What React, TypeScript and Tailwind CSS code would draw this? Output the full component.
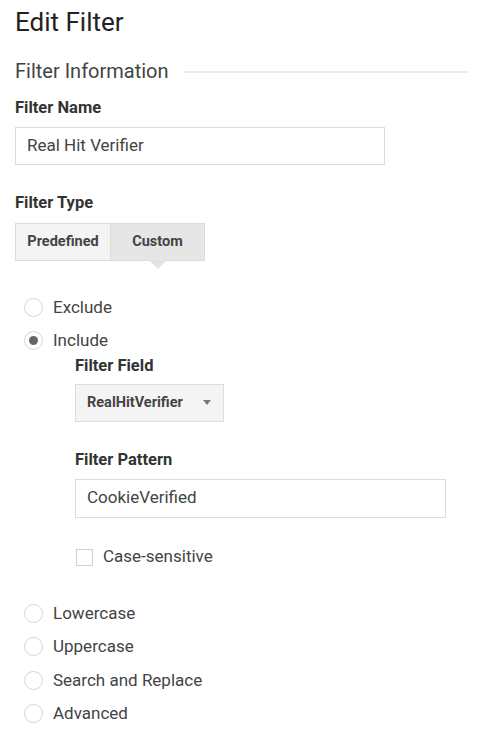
import React, { useState } from 'react';

const Radio: React.FC<{ label: string; checked?: boolean; onClick: () => void }> = ({ label, checked, onClick }) => (
  <button onClick={onClick} className="flex items-center h-[33.5px] text-left">
    <span className="w-[19px] h-[19px] rounded-full border border-[#d6d6d6] bg-white flex items-center justify-center ml-[24px] mr-[10px]">
      {checked && <span className="w-[9px] h-[9px] rounded-full bg-[#666]" />}
    </span>
    <span className="text-[17px] text-[#444]">{label}</span>
  </button>
);

export default function App() {
  const [type, setType] = useState<'predefined' | 'custom'>('custom');
  const [mode, setMode] = useState('Include');
  const [caseSensitive, setCaseSensitive] = useState(false);

  return (
    <div className="w-[500px] h-[735px] bg-white text-[#333] overflow-hidden" style={{ fontFamily: 'Roboto, "Noto Sans", sans-serif' }}>
      <div className="px-[15px] pt-[7px]">
        <h1 className="text-[26px] leading-[30px] text-[#222]">Edit Filter</h1>

        {/* Section heading with rule */}
        <div className="flex items-center mt-[21px] h-[26px]">
          <span className="text-[20px] text-[#444] whitespace-nowrap">Filter Information</span>
          <div className="flex-1 h-[2px] bg-[#ececec] ml-[15px] mr-[17px] mt-[2px]" />
        </div>

        <div className="mt-[14px] text-[16.5px] font-bold text-[#333] leading-[20px]">Filter Name</div>
        <div className="mt-[9px] w-[370px] h-[38px] border border-[#dcdcdc] flex items-center px-[11px] text-[17px] text-[#444]">
          Real Hit Verifier
        </div>

        <div className="mt-[28px] text-[16.5px] font-bold text-[#333] leading-[20px]">Filter Type</div>
        <div className="mt-[10px] flex w-[190px] h-[38px] border border-[#dcdcdc] bg-[#f4f4f4] relative">
          <button
            onClick={() => setType('predefined')}
            className={`w-[95px] h-full text-[14.5px] font-bold text-[#444] ${type === 'predefined' ? 'bg-[#e6e6e6]' : ''}`}
          >
            Predefined
          </button>
          <button
            onClick={() => setType('custom')}
            className={`w-[95px] h-full text-[14.5px] font-bold text-[#444] border-l border-[#dcdcdc] relative ${type === 'custom' ? 'bg-[#e6e6e6]' : ''}`}
          >
            Custom
            {type === 'custom' && (
              <span className="absolute left-1/2 -translate-x-1/2 top-full w-0 h-0 border-l-[9px] border-r-[9px] border-t-[9px] border-l-transparent border-r-transparent border-t-[#e2e2e2]" />
            )}
          </button>
        </div>
      </div>

      <div className="mt-[29.5px] flex flex-col">
        <Radio label="Exclude" checked={mode === 'Exclude'} onClick={() => setMode('Exclude')} />
        <Radio label="Include" checked={mode === 'Include'} onClick={() => setMode('Include')} />

        <div className="pl-[75px]">
          <div className="text-[16.5px] font-bold text-[#333] leading-[20px] mt-[-2px]">Filter Field</div>
          <div className="mt-[8px] w-[149px] h-[38px] border border-[#dcdcdc] bg-[#f4f4f4] flex items-center justify-between pl-[11px] pr-[12px]">
            <span className="text-[14.5px] font-bold text-[#444]">RealHitVerifier</span>
            <span className="w-0 h-0 border-l-[4.5px] border-r-[4.5px] border-t-[5px] border-l-transparent border-r-transparent border-t-[#777]" />
          </div>

          <div className="mt-[28px] text-[16.5px] font-bold text-[#333] leading-[20px]">Filter Pattern</div>
          <div className="mt-[9px] w-[371px] h-[39px] border border-[#dcdcdc] flex items-center px-[11px] text-[17px] text-[#444]">
            CookieVerified
          </div>

          <button onClick={() => setCaseSensitive(!caseSensitive)} className="mt-[29.5px] h-[20px] flex items-center">
            <span className="w-[17px] h-[17px] border border-[#cfcfcf] ml-[1px] mr-[10px] flex items-center justify-center text-[12px] text-[#555]">
              {caseSensitive ? '✓' : ''}
            </span>
            <span className="text-[17px] text-[#444]">Case-sensitive</span>
          </button>
        </div>

        <div className="mt-[29.5px] flex flex-col">
          {['Lowercase', 'Uppercase', 'Search and Replace', 'Advanced'].map((l) => (
            <Radio key={l} label={l} checked={mode === l} onClick={() => setMode(l)} />
          ))}
        </div>
      </div>
    </div>
  );
}
